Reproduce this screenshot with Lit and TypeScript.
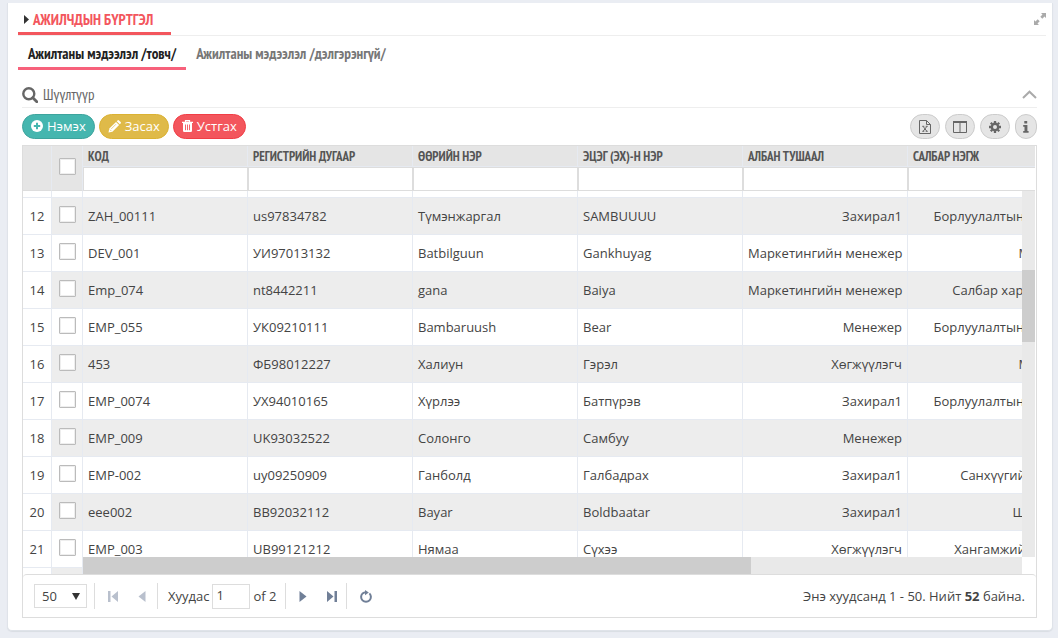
import { LitElement, html, css, svg } from "lit";
import { customElement, state } from "lit/decorators.js";
import { classMap } from "lit/directives/class-map.js";

interface Row {
  n: number;
  code: string;
  reg: string;
  name: string;
  father: string;
  job: string;
  dept: string;
}

const rows: Row[] = [
  { n: 12, code: "ZAH_00111", reg: "us97834782", name: "Түмэнжаргал", father: "SAMBUUUU", job: "Захирал1", dept: "Борлуулалтын хэлтэс" },
  { n: 13, code: "DEV_001", reg: "УИ97013132", name: "Batbilguun", father: "Gankhuyag", job: "Маркетингийн менежер", dept: "Монгол" },
  { n: 14, code: "Emp_074", reg: "nt8442211", name: "gana", father: "Baiya", job: "Маркетингийн менежер", dept: "Салбар хариуцагч" },
  { n: 15, code: "EMP_055", reg: "УК09210111", name: "Bambaruush", father: "Bear", job: "Менежер", dept: "Борлуулалтын хэлтэс" },
  { n: 16, code: "453", reg: "ФБ98012227", name: "Халиун", father: "Гэрэл", job: "Хөгжүүлэгч", dept: "Монгол" },
  { n: 17, code: "EMP_0074", reg: "УХ94010165", name: "Хүрлээ", father: "Батпүрэв", job: "Захирал1", dept: "Борлуулалтын хэлтэс" },
  { n: 18, code: "EMP_009", reg: "UK93032522", name: "Солонго", father: "Самбуу", job: "Менежер", dept: "" },
  { n: 19, code: "EMP-002", reg: "uy09250909", name: "Ганболд", father: "Галбадрах", job: "Захирал1", dept: "Санхүүгийн алба" },
  { n: 20, code: "eee002", reg: "BB92032112", name: "Bayar", father: "Boldbaatar", job: "Захирал1", dept: "Шалгагч" },
  { n: 21, code: "EMP_003", reg: "UB99121212", name: "Нямаа", father: "Сүхээ", job: "Хөгжүүлэгч", dept: "Хангамжийн алба" },
];

const columns = ["КОД", "РЕГИСТРИЙН ДУГААР", "ӨӨРИЙН НЭР", "ЭЦЭГ (ЭХ)-Н НЭР", "АЛБАН ТУШААЛ", "САЛБАР НЭГЖ"];

const icon = (w: number, h: number, box: string, body: unknown) =>
  html`<svg width=${w} height=${h} viewBox=${box} aria-hidden="true">${body}</svg>`;

const icons = {
  caret: icon(5, 9, "0 0 5 9", svg`<path d="M0 0l5 4.500-5 4.500z" fill="#333"/>`),
  expand: icon(12, 12, "0 0 12 12", svg`<path d="M7 0h5v5l-1.500-1.500-2.200 2.200-2-2 2.200-2.200zM5 12H0V7l1.500 1.500 2.200-2.200 2 2-2.200 2.200z" fill="#aaa"/>`),
  search: icon(16, 16, "0 0 16 16", svg`<g fill="none" stroke="#666"><circle cx="6.800" cy="6.800" r="5.500" stroke-width="2.400"/><path d="M10.800 10.800l4 4" stroke-width="2.800" stroke-linecap="round"/></g>`),
  up: icon(15, 9, "0 0 15 9", svg`<path d="M1 8l6.500-6.300L14 8" fill="none" stroke="#aaa" stroke-width="2"/>`),
  plus: icon(12, 12, "0 0 12 12", svg`<circle cx="6" cy="6" r="6" fill="#fff"/><path d="M6 2.800v6.400M2.800 6h6.400" stroke="#45b6af" stroke-width="2"/>`),
  pencil: icon(13, 13, "0 0 13 13", svg`<path d="M0.500 12.500l.8-3.900L8 1.900l3.100 3.100-6.700 6.700zM8.700 1.200l.8-.8q.8-.6 1.500 0l1.600 1.600q.6.700 0 1.500l-.8.800z" fill="#fff"/><path d="M1.900 9.600l1.500 1.500M3.300 8.900L8 4.200" stroke="#dfba49" stroke-width=".7"/>`),
  trash: icon(11, 12, "0 0 11 12", svg`<path d="M3.500 1.800V.6h4v1.200M0 2.400h11" fill="none" stroke="#fff" stroke-width="1.200"/><path d="M1 3h9v7.800q0 1.200-1.200 1.200H2.200Q1 12 1 10.800z" fill="#fff"/><path d="M3.500 4.500v5.700M5.500 4.500v5.700M7.500 4.500v5.700" stroke="#f3565d" stroke-width=".9"/>`),
  excel: icon(12, 14, "0 0 12 14", svg`<path d="M.5.500h7l4 4v9H.5zM7.500.500v4h4" fill="none" stroke="#666"/><path d="M3.300 6.300h2M6.700 6.300h2M3.300 11.300h2M6.700 11.300h2M4.200 6.500l3.600 4.700M7.800 6.500l-3.600 4.700" stroke="#666" fill="none"/>`),
  cols: icon(14, 12, "0 0 14 12", svg`<path d="M.5.500h13v11H.5zM7 1v10.500" fill="none" stroke="#666"/><path d="M0 1h14" stroke="#666" stroke-width="2"/>`),
  gear: icon(12, 12, "0 0 12 12", svg`<g stroke="#666" fill="none"><circle cx="6" cy="6" r="3.200" stroke-width="2.400"/><path d="M6 0v2M6 10v2M0 6h2M10 6h2M1.800 1.800l1.400 1.400M8.800 8.800l1.400 1.400M1.800 10.200l1.400-1.400M8.800 3.200l1.400-1.400" stroke-width="2.300"/></g>`),
  info: icon(6, 12, "0 0 6 12", svg`<path d="M1.300 0h2.900v2.400H1.300zM.2 4h4.200v6h1.200v1.800H.2V10h1.300V5.800H.2z" fill="#666"/>`),
  first: icon(10, 11, "0 0 10 11", svg`<path d="M0 0h2.500v11H0zM10 0v11L3.500 5.500z" fill="#b9c0cd"/>`),
  prev: icon(8, 11, "0 0 8 11", svg`<path d="M7.500 0v11L.5 5.500z" fill="#b9c0cd"/>`),
  next: icon(8, 11, "0 0 8 11", svg`<path d="M.5 0v11l7-5.500z" fill="#707f97"/>`),
  last: icon(10, 11, "0 0 10 11", svg`<path d="M7.500 0H10v11H7.500zM0 0v11l6.500-5.500z" fill="#707f97"/>`),
  reload: icon(12, 13, "0 0 12 13", svg`<path d="M2.600 3.400A4.900 4.900 0 1 0 9.400 3.400M2.600 3.400Q3.900 2.300 6 2.200" fill="none" stroke="#707f97" stroke-width="2"/><path d="M5 0l3.800 2.500L5 5.200z" fill="#707f97"/>`),
};

@customElement("app-root")
export class AppRoot extends LitElement {
  @state() private tab = 0;

  static styles = css`
    :host {
      display: block;
      box-sizing: border-box;
      min-height: 100vh;
      padding: 3px 5px 7px 7px;
      background: #eaedf3;
      color: #444;
      font: 13px/20px "Open Sans", "Noto Sans", sans-serif;
    }
    * { box-sizing: border-box; }
    svg { display: block; flex: none; }
    button, input, select { font: inherit; color: inherit; margin: 0; }
    button { cursor: pointer; }
    .narrow {
      font-family: "PT Sans Narrow", "Open Sans Condensed", "Roboto Condensed", "Liberation Sans Narrow", "Open Sans", sans-serif;
    }
    .card {
      background: #fff;
      border: 1px solid #dfe3e9;
      border-top: 0;
      border-radius: 0 0 5px 5px;
      padding: 0 6px 12px 10px;
      box-shadow: 0 1px 1px #d9dde3;
    }
    .head {
      display: flex;
      justify-content: space-between;
      align-items: flex-start;
      height: 33px;
      border-bottom: 1px solid #eee;
    }
    .title {
      display: flex;
      align-items: center;
      gap: 4px;
      height: 32px;
      margin: 0;
      padding: 4px 18px 0 6px;
      border-bottom: 3px solid #f3565d;
      color: #f3565d;
      font-size: 15px;
      font-weight: 700;
    }
    .bare { display: flex; padding: 0; border: 0; background: none; }
    .expand { margin-top: 10px; }
    .tabs { display: flex; height: 34px; }
    .tab {
      padding: 5px 10px 0;
      border: 0;
      border-bottom: 3px solid transparent;
      background: none;
      color: #777;
      font-size: 15px;
      font-weight: 700;
    }
    .tab.on { color: #222; border-color: #f7617b; }
    .main { padding: 13px 9px 0 4px; }
    .filter {
      display: flex;
      align-items: center;
      gap: 5px;
      height: 25px;
      padding-bottom: 1px;
      border-bottom: 1px solid #eee;
      color: #666;
    }
    .filter h2 { flex: 1; margin: 0; font-size: 15px; font-weight: 400; }
    .bar { display: flex; gap: 4px; padding: 6px 0; }
    .gap { flex: 1; }
    .tools { display: flex; gap: 5px; }
    .pill {
      display: flex;
      align-items: center;
      gap: 4px;
      height: 25px;
      padding: 0 8px 1px;
      border: 1px solid;
      border-radius: 13px;
      color: #fff;
    }
    .add { background: #45b6af; border-color: #3ea49d; }
    .edit { background: #dfba49; border-color: #dbb233; }
    .del { background: #f3565d; border-color: #f13e46; }
    .tool {
      display: flex;
      align-items: center;
      justify-content: center;
      width: 30px;
      height: 25px;
      padding: 0;
      border: 1px solid #ccc;
      border-radius: 13px;
      background: #e5e5e5;
    }
    .tool.slim { width: 22px; }
    .grid { border: 1px solid #ddd; }
    .panes {
      display: grid;
      grid-template-columns: 60px minmax(0, 1fr) 13px 1px;
      grid-template-rows: minmax(0, 1fr) 17px;
      height: 428px;
    }
    .pane { overflow: hidden; }
    .frozen { grid-row: 1 / 3; }
    .wide { grid-column: 2 / 4; grid-row: 1; }
    table { border-collapse: separate; border-spacing: 0; table-layout: fixed; }
    .left { width: 60px; }
    .right { width: 990px; }
    .idx { width: 29px; }
    .chk { width: 31px; }
    th, td { padding: 0; border: 0 solid #e6eaf1; border-right-width: 1px; }
    thead th { background: #e5e5e5; text-align: left; font-size: 13px; color: #555; }
    .label { height: 21px; padding: 0 5px; line-height: 22px; border-bottom: 1px solid #e6eaf1; }
    .query {
      display: block;
      width: calc(100% + 1px);
      height: 24px;
      padding: 0 4px;
      border: 1px solid #ddd;
      border-radius: 0;
      background: #fff;
    }
    .left thead th { height: 45px; padding-bottom: 4px; border-bottom: 1px solid #ddd; }
    .peek td { height: 7px; }
    td { height: 37px; border-bottom-width: 1px; white-space: nowrap; overflow: hidden; }
    .right td { padding: 0 5px; }
    .left .num { text-align: center; }
    .odd td { background: #ededed; }
    .odd .num { background: #fff; }
    .right .end { text-align: right; }
    input[type="checkbox"] {
      appearance: none;
      display: block;
      width: 17px;
      height: 17px;
      margin: 0 auto;
      border: 1px solid #bbb;
      border-radius: 1px;
      box-shadow: inset 0 0 0 1px #eee;
      background: #fff;
    }
    td input[type="checkbox"] { margin-bottom: 4px; }
    .vbar { grid-column: 3; grid-row: 1; margin-top: 45px; padding-top: 79px; background: #e9e9e9; z-index: 1; }
    .vthumb { height: 72px; background: #cdcdcd; }
    .hbar { grid-column: 2; grid-row: 2; background: #e9e9e9; }
    .hthumb { width: 71.1%; height: 100%; background: #cdcdcd; }
    .foot {
      display: flex;
      align-items: center;
      height: 43px;
      padding: 0 11px;
      border-top: 1px solid #ddd;
      border-radius: 4px 4px 0 0;
    }
    .size {
      appearance: none;
      width: 53px;
      height: 24px;
      padding: 0 7px;
      border: 1px solid #ddd;
      border-radius: 0;
      background: #fff;
    }
    .pick { display: grid; align-items: center; }
    .pick > * { grid-area: 1 / 1; }
    .arrow { justify-self: end; margin-right: 7px; pointer-events: none; border: 4px solid transparent; border-top: 7px solid #333; border-bottom: 0; }
    .sep { width: 1px; height: 26px; margin: 0 13px 0 9px; background: #ddd; }
    .sep.near { margin-left: 7px; }
    .sep.text { margin: 0 10px 0 11px; }
    .nav { gap: 20px; display: flex; }
    .page { display: flex; align-items: center; gap: 3px; }
    .page input { width: 38px; height: 25px; padding: 0 3px 2px; border: 1px solid #ddd; border-radius: 0; background: #fff; }
  `;

  render() {
    return html`
      <main class="card">
        <header class="head">
          <h1 class="title narrow">${icons.caret}АЖИЛЧДЫН БҮРТГЭЛ</h1>
          <button class="bare expand" aria-label="Expand">${icons.expand}</button>
        </header>
        <nav class="tabs">
          ${["Ажилтаны мэдээлэл /товч/", "Ажилтаны мэдээлэл /дэлгэрэнгүй/"].map(
            (t, i) => html`<button class=${classMap({ tab: true, narrow: true, on: this.tab === i })} @click=${() => (this.tab = i)}>${t}</button>`,
          )}
        </nav>
        <section class="main">
          <div class="filter">
            ${icons.search}
            <h2 class="narrow">Шүүлтүүр</h2>
            <button class="bare" aria-label="Collapse">${icons.up}</button>
          </div>
          <div class="bar">
            <button class="pill add">${icons.plus}Нэмэх</button>
            <button class="pill edit">${icons.pencil}Засах</button>
            <button class="pill del">${icons.trash}Устгах</button>
            <span class="gap"></span>
            <div class="tools">
              <button class="tool" aria-label="Excel">${icons.excel}</button>
              <button class="tool" aria-label="Columns">${icons.cols}</button>
              <button class="tool" aria-label="Settings">${icons.gear}</button>
              <button class="tool slim" aria-label="Info">${icons.info}</button>
            </div>
          </div>
          <div class="grid">
            <div class="panes">
              <div class="pane frozen">
                <table class="left">
                  <thead>
                    <tr><th class="idx"></th><th class="chk"><input type="checkbox" aria-label="Select all" /></th></tr>
                  </thead>
                  <tbody>
                    <tr class="peek"><td></td><td></td></tr>
                    ${rows.map(
                      (r, i) => html`<tr class=${classMap({ odd: i % 2 === 0 })}>
                        <td class="num">${r.n}</td>
                        <td><input type="checkbox" aria-label=${r.code} /></td>
                      </tr>`,
                    )}
                    <tr class="odd"><td class="num"></td><td></td></tr>
                  </tbody>
                </table>
              </div>
              <div class="pane wide">
                <table class="right">
                  <thead>
                    <tr>
                      ${columns.map(
                        (c) => html`<th><div class="label narrow">${c}</div><input class="query" aria-label=${c} /></th>`,
                      )}
                    </tr>
                  </thead>
                  <tbody>
                    <tr class="peek">${columns.map(() => html`<td></td>`)}</tr>
                    ${rows.map(
                      (r, i) => html`<tr class=${classMap({ odd: i % 2 === 0 })}>
                        <td>${r.code}</td>
                        <td>${r.reg}</td>
                        <td>${r.name}</td>
                        <td>${r.father}</td>
                        <td class="end">${r.job}</td>
                        <td class="end">${r.dept}</td>
                      </tr>`,
                    )}
                  </tbody>
                </table>
              </div>
              <div class="vbar"><div class="vthumb"></div></div>
              <div class="hbar"><div class="hthumb"></div></div>
            </div>
            <footer class="foot">
              <span class="pick">
                <select class="size" aria-label="Rows"><option>50</option></select>
                <span class="arrow"></span>
              </span>
              <span class="sep near"></span>
              <span class="nav">
                <button class="bare" aria-label="First">${icons.first}</button>
                <button class="bare" aria-label="Previous">${icons.prev}</button>
              </span>
              <span class="sep text"></span>
              <span class="page"><label for="page">Хуудас</label><input id="page" value="1" /><span>of 2</span></span>
              <span class="sep"></span>
              <span class="nav">
                <button class="bare" aria-label="Next">${icons.next}</button>
                <button class="bare" aria-label="Last">${icons.last}</button>
              </span>
              <span class="sep"></span>
              <button class="bare" aria-label="Reload">${icons.reload}</button>
              <span class="gap"></span>
              <span>Энэ хуудсанд 1 - 50. Нийт <b>52</b> байна.</span>
            </footer>
          </div>
        </section>
      </main>
    `;
  }
}
